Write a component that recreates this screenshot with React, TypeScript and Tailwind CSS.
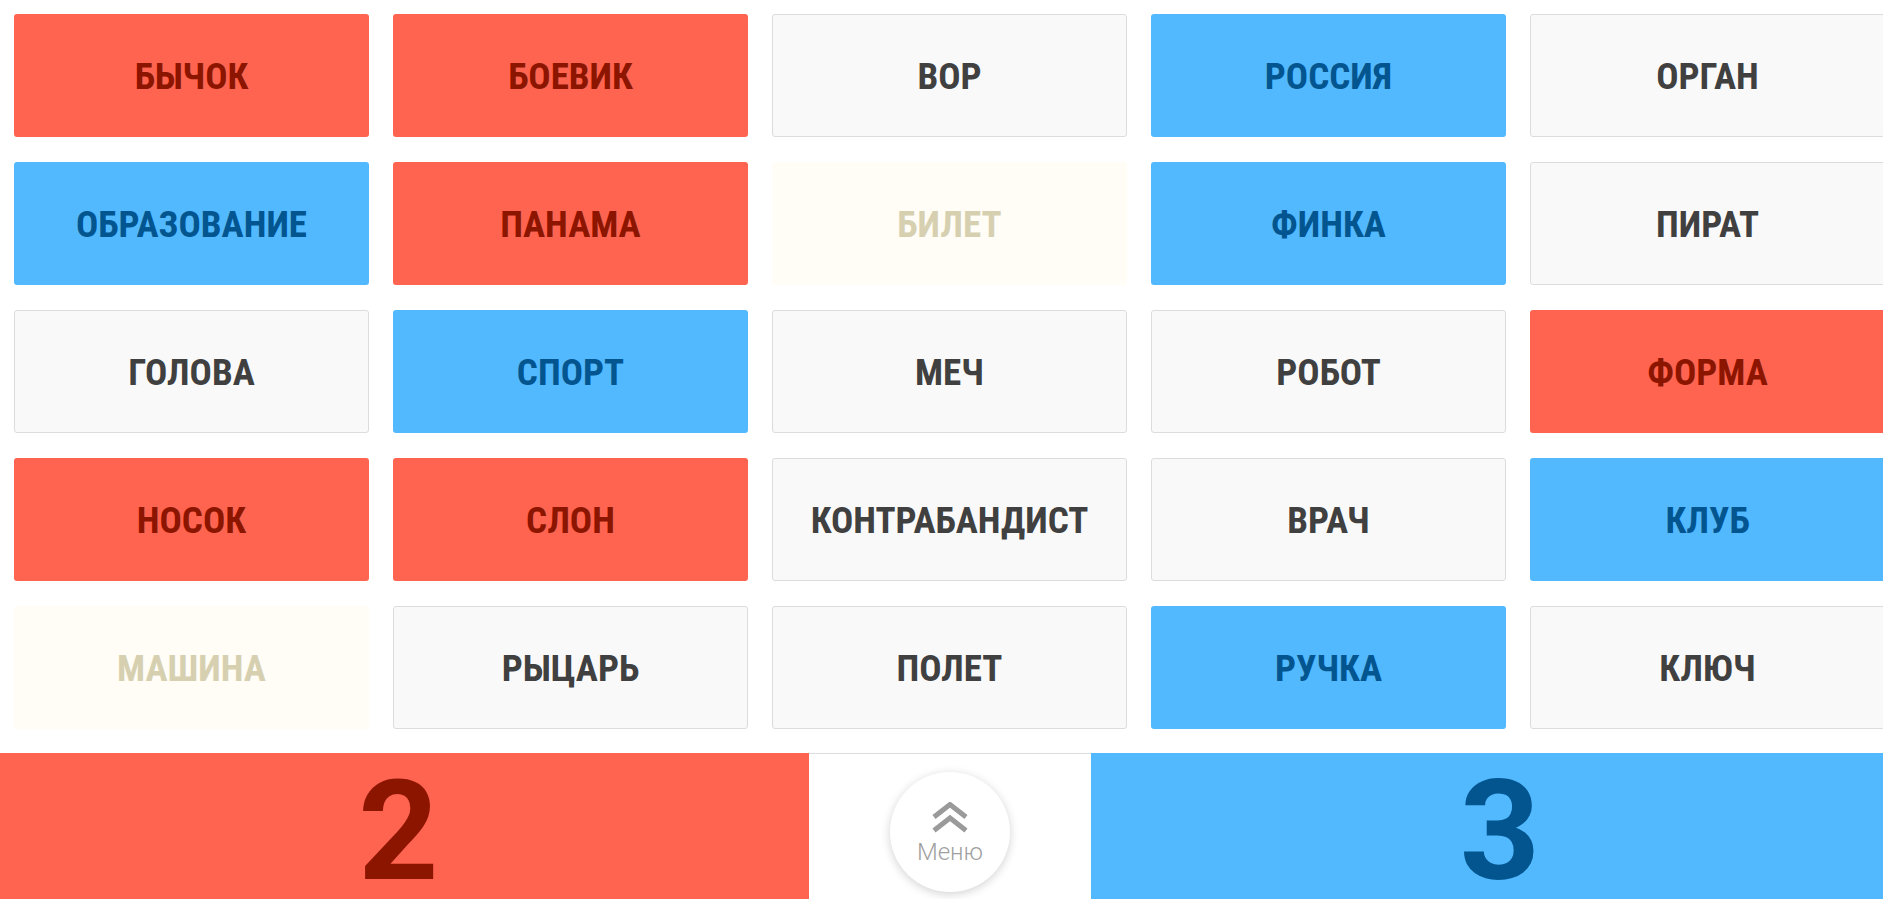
import React from 'react'

type Team = 'red' | 'blue' | 'neutral' | 'killer'

interface Card {
    word: string;
    team: Team;
}

const cards: Card[] = [
    { word: 'БЫЧОК', team: 'red' },
    { word: 'БОЕВИК', team: 'red' },
    { word: 'ВОР', team: 'neutral' },
    { word: 'РОССИЯ', team: 'blue' },
    { word: 'ОРГАН', team: 'neutral' },
    { word: 'ОБРАЗОВАНИЕ', team: 'blue' },
    { word: 'ПАНАМА', team: 'red' },
    { word: 'БИЛЕТ', team: 'killer' },
    { word: 'ФИНКА', team: 'blue' },
    { word: 'ПИРАТ', team: 'neutral' },
    { word: 'ГОЛОВА', team: 'neutral' },
    { word: 'СПОРТ', team: 'blue' },
    { word: 'МЕЧ', team: 'neutral' },
    { word: 'РОБОТ', team: 'neutral' },
    { word: 'ФОРМА', team: 'red' },
    { word: 'НОСОК', team: 'red' },
    { word: 'СЛОН', team: 'red' },
    { word: 'КОНТРАБАНДИСТ', team: 'neutral' },
    { word: 'ВРАЧ', team: 'neutral' },
    { word: 'КЛУБ', team: 'blue' },
    { word: 'МАШИНА', team: 'killer' },
    { word: 'РЫЦАРЬ', team: 'neutral' },
    { word: 'ПОЛЕТ', team: 'neutral' },
    { word: 'РУЧКА', team: 'blue' },
    { word: 'КЛЮЧ', team: 'neutral' },
]

const cardStyle: Record<Team, string> = {
    red: 'bg-[#ff6450] text-[#8c1500]',
    blue: 'bg-[#52b9ff] text-[#02558f]',
    neutral: 'bg-[#f9f9f9] text-[#404040] border border-[#dcdcdc]',
    killer: 'bg-[#fffdf6] text-[#d6d0b1]',
}

function MenuIcon() {
    return (
        <svg width="36" height="31" viewBox="0 0 36 31" fill="none" stroke="#9a9a9a" strokeWidth="5" strokeLinejoin="miter">
            <path d="M2 15 L18 2.5 L34 15" />
            <path d="M2 28.5 L18 16 L34 28.5" />
        </svg>
    )
}

export default function App() {
    return (
        <div className="w-full h-[899px] overflow-hidden bg-white">
            <div className="w-[1899px] font-['Roboto_Condensed',Roboto,'Liberation_Sans',sans-serif]">
                <div className="grid grid-cols-[repeat(5,355px)] gap-x-[24px] gap-y-[25px] pl-[14px] pt-[14px]">
                    {cards.map((c) => (
                        <div key={c.word} className={`h-[123px] rounded-[3px] flex items-center justify-center pt-[3px] text-[37px] font-bold uppercase ${cardStyle[c.team]}`}>
                            {c.word}
                        </div>
                    ))}
                </div>

                <div className="mt-[24px] flex h-[146px] font-['Roboto','Liberation_Sans',sans-serif]">
                    <div className="w-[809px] bg-[#ff6450] text-[#8c1500] flex items-center justify-center pt-[10px] pr-[12px] text-[140px] font-bold leading-[120px]">
                        2
                    </div>
                    <div className="w-[282px] border-t border-[#dddddd] flex items-center justify-center pt-[10px]">
                        <button className="w-[120px] h-[120px] rounded-full bg-white shadow-[0_2px_10px_rgba(0,0,0,0.18)] flex flex-col items-center justify-center gap-[7px] pt-[2px]">
                            <MenuIcon />
                            <span className="text-[24px] font-light text-[#a0a0a0] leading-none">Меню</span>
                        </button>
                    </div>
                    <div className="w-[808px] bg-[#52b9ff] text-[#02558f] flex items-center justify-center pt-[10px] pl-[10px] text-[140px] font-bold leading-[120px]">
                        3
                    </div>
                </div>
            </div>
        </div>
    )
}
